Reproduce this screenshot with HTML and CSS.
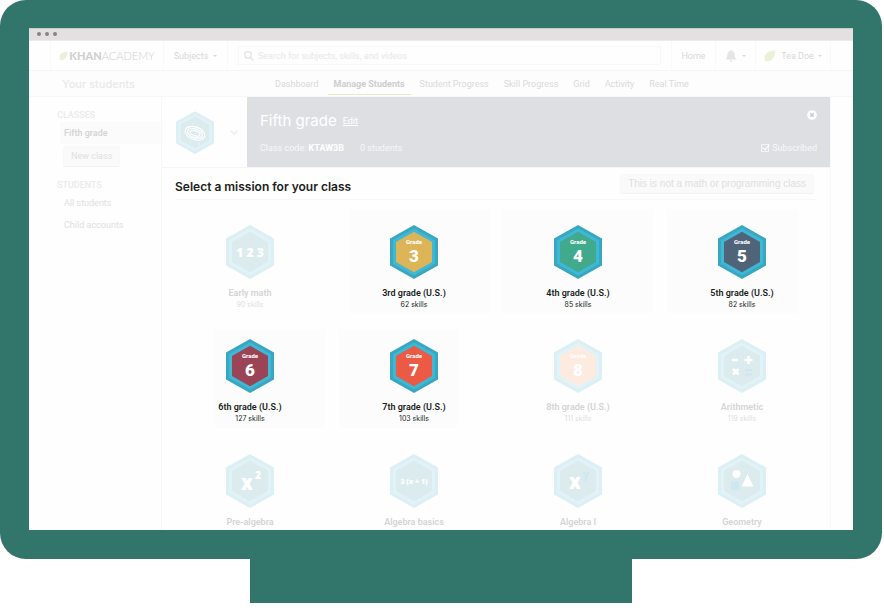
FILE: index.html
```
<!DOCTYPE html>
<html lang="en">
<head>
<meta charset="utf-8">
<title>Khan Academy – Manage Students</title>
<meta name="viewport" content="width=device-width, initial-scale=1">
<link rel="stylesheet" href="styles.css">
</head>
<body>
<svg class="defs" width="0" height="0" aria-hidden="true">
  <symbol id="hex" viewBox="0 0 48 54">
    <path class="hex-rim" d="M24 0 48 13.5v27L24 54 0 40.500v-27z"/>
    <path class="hex-band" d="M24 3.500 45 15.200v23.600L24 50.500 3 38.800V15.200z"/>
    <path class="hex-core" d="M24 6.700 42 16.900v20.200L24 47.300 6 37.100V16.900z"/>
  </symbol>
  <symbol id="leaf" viewBox="0 0 12 12">
    <path d="M11.500.5C6 .3 1 2.500.7 7.500c-.1 1.700.3 3 .8 4 5 .2 9.500-2.500 10-11z"/>
  </symbol>
</svg>

<div class="monitor">
  <div class="screen">
    <div class="window-bar"><i></i><i></i><i></i></div>

    <header class="topbar">
      <a class="logo" href="#"><svg class="leaf" width="9" height="10"><use href="#leaf"/></svg><b>KHAN</b>ACADEMY</a>
      <button class="subjects">Subjects <span class="caret"></span></button>
      <form class="search">
        <label class="search-box">
          <svg width="10" height="10" viewBox="0 0 10 10"><circle cx="4" cy="4" r="3.200"/><path d="M6.500 6.500 9.500 9.500"/></svg>
          <input type="text" aria-label="Search" placeholder="Search for subjects, skills, and videos">
        </label>
      </form>
      <a class="home" href="#">Home</a>
      <button class="bell" aria-label="Notifications">
        <svg width="12" height="12" viewBox="0 0 12 12"><path d="M6 0c.6 0 1 .4 1 1 1.800.5 2.700 2 2.700 4 0 2.500.8 3.500 2 4.500H.3c1.200-1 2-2 2-4.500 0-2 .9-3.500 2.700-4 0-.6.4-1 1-1zM4.600 10.300h2.800C7.300 11.300 6.800 11.800 6 11.800s-1.300-.5-1.400-1.500z"/></svg>
        <span class="caret"></span>
      </button>
      <button class="user"><svg class="leaf" width="12" height="12"><use href="#leaf"/></svg>Tea Doe <span class="caret"></span></button>
    </header>

    <nav class="subnav">
      <h2>Your students</h2>
      <div class="tabs">
        <a href="#">Dashboard</a>
        <a class="current" href="#">Manage Students</a>
        <a href="#">Student Progress</a>
        <a href="#">Skill Progress</a>
        <a href="#">Grid</a>
        <a href="#">Activity</a>
        <a href="#">Real Time</a>
      </div>
    </nav>

    <div class="body">
      <aside class="sidebar">
        <h3>CLASSES</h3>
        <a class="selected" href="#">Fifth grade</a>
        <button class="soft-button">New class</button>
        <h3 class="second">STUDENTS</h3>
        <a href="#">All students</a>
        <a href="#">Child accounts</a>
      </aside>

      <main class="content">
        <section class="class-header">
          <button class="avatar" aria-label="Change class mission">
            <svg class="faded" width="38" height="43" viewBox="0 0 48 54">
              <use href="#hex"/>
              <g class="galaxy" transform="rotate(20 24 28)"><ellipse cx="24" cy="28" rx="13" ry="8"/><ellipse cx="24" cy="28" rx="10" ry="5.500"/><ellipse cx="24" cy="28" rx="6.500" ry="3"/></g>
              <path class="stars" d="M13 21h1v1h-1zM34 19h1v1h-1zM18 39h1v1h-1zM29 41h1v1h-1zM21 15h1v1h-1z"/>
            </svg>
            <svg class="chevron" width="8" height="5" viewBox="0 0 8 5"><path d="M.7.7 4 4 7.300.7"/></svg>
          </button>
          <div class="hero">
            <div class="hero-row">
              <h1>Fifth grade</h1><a href="#">Edit</a>
              <button class="close" aria-label="Close"><svg width="10" height="10" viewBox="0 0 10 10"><circle cx="5" cy="5" r="4.800"/><path d="m3.300 3.300 3.400 3.400m0-3.400L3.300 6.700"/></svg></button>
            </div>
            <div class="hero-row small">
              <span>Class code: <b>KTAW3B</b></span><span>0 students</span>
              <label class="subscribed"><input type="checkbox" checked>Subscribed</label>
            </div>
          </div>
        </section>

        <section class="missions">
          <div class="missions-head">
            <h2>Select a mission for your class</h2>
            <button class="soft-button wide">This is not a math or programming class</button>
          </div>
          <div class="grid">
            <a class="card faded" href="#"><svg viewBox="0 0 48 54"><use href="#hex"/><text class="n123" x="24" y="31.500">1 2 3</text></svg><b>Early math</b><span>90 skills</span></a>
            <a class="card lit third" href="#"><svg viewBox="0 0 48 54"><use href="#hex"/><text class="gr" x="24" y="19">Grade</text><text class="num" x="24" y="37">3</text></svg><b>3rd grade (U.S.)</b><span>62 skills</span></a>
            <a class="card lit fourth" href="#"><svg viewBox="0 0 48 54"><use href="#hex"/><text class="gr" x="24" y="19">Grade</text><text class="num" x="24" y="37">4</text></svg><b>4th grade (U.S.)</b><span>85 skills</span></a>
            <a class="card lit fifth" href="#"><svg viewBox="0 0 48 54"><use href="#hex"/><text class="gr" x="24" y="19">Grade</text><text class="num" x="24" y="37">5</text></svg><b>5th grade (U.S.)</b><span>82 skills</span></a>

            <a class="card lit sixth" href="#"><svg viewBox="0 0 48 54"><use href="#hex"/><text class="gr" x="24" y="19">Grade</text><text class="num" x="24" y="37">6</text></svg><b>6th grade (U.S.)</b><span>127 skills</span></a>
            <a class="card lit seventh" href="#"><svg viewBox="0 0 48 54"><use href="#hex"/><text class="gr" x="24" y="19">Grade</text><text class="num" x="24" y="37">7</text></svg><b>7th grade (U.S.)</b><span>103 skills</span></a>
            <a class="card faded eighth" href="#"><svg viewBox="0 0 48 54"><use href="#hex"/><text class="gr" x="24" y="19">Grade</text><text class="num" x="24" y="37">8</text></svg><b>8th grade (U.S.)</b><span>111 skills</span></a>
            <a class="card faded" href="#"><svg viewBox="0 0 48 54"><use href="#hex"/><path class="ops" d="M14 21h6M26.500 21h8M30.500 17v8M15 30l5.500 5.500M20.500 30 15 35.500"/><path class="ops dim" d="M27 31h7M27 35.500h7"/></svg><b>Arithmetic</b><span>119 skills</span></a>

            <a class="card faded" href="#"><svg viewBox="0 0 48 54"><use href="#hex"/><text class="var" x="21" y="35.500">x</text><text class="sup" x="32" y="25">2</text></svg><b>Pre-algebra</b></a>
            <a class="card faded" href="#"><svg viewBox="0 0 48 54"><use href="#hex"/><text class="expr" x="24" y="29.500">3 (x + 1)</text></svg><b>Algebra basics</b></a>
            <a class="card faded" href="#"><svg viewBox="0 0 48 54"><use href="#hex"/><text class="var" x="21" y="34.500">x</text><text class="sup dim" x="32" y="24">y</text></svg><b>Algebra I</b></a>
            <a class="card faded" href="#"><svg viewBox="0 0 48 54"><use href="#hex"/><path class="shape" d="M29.500 20 35.500 32.500h-12z"/><circle class="shape" cx="18.500" cy="20" r="4"/><path class="shape dim" d="M13 27.500h8.500V36H13z"/></svg><b>Geometry</b></a>
          </div>
        </section>
      </main>
    </div>
  </div>
</div>
<div class="stand"></div>
</body>
</html>
```
FILE: styles.css
```
* { box-sizing: border-box; }

body {
  margin: 0;
  padding-right: 2px;
  background: #fff;
  color: #dcdcdc;
  font: 9px/12px Roboto, "Liberation Sans", sans-serif;
}

h1, h2, h3 { margin: 0; }
a { color: inherit; text-decoration: none; }
button {
  margin: 0;
  padding: 0;
  border: 0;
  background: none;
  color: inherit;
  font: inherit;
}
.defs { position: absolute; }

.monitor {
  padding: 28px 29px 29px;
  border-radius: 26px;
  background: #32766b;
}
.screen { background: #fefefe; overflow: hidden; }
.stand {
  width: 382px;
  height: 44px;
  margin: 0 auto;
  background: #32766b;
}

.window-bar {
  display: flex;
  gap: 4px;
  height: 13px;
  padding: 3px 8px;
  border-top: 1px solid #c8cccb;
  border-bottom: 1px solid #eceaeb;
  background: #e2e0e1;
}
.window-bar i {
  width: 4px;
  height: 4px;
  border-radius: 50%;
  background: #858384;
}

/* Top bar */
.topbar {
  display: flex;
  height: 30px;
  padding: 0 22px 0 21px;
  border-bottom: 1px solid #f5f5f5;
  color: #d8d8d8;
}
.topbar > * {
  display: flex;
  align-items: center;
  justify-content: center;
  border-left: 1px solid #f9f9f9;
}
.topbar > :last-child { border-right: 1px solid #f9f9f9; }
.leaf { fill: #eaf1d6; }
.caret {
  margin-left: 5px;
  border: 2px solid transparent;
  border-top-color: currentColor;
  border-bottom: 0;
}
.logo { width: 113px; font: 300 11px/14px Lato, sans-serif; color: #d0d0d0; }
.logo b { font-weight: 900; }
.logo .leaf { margin-right: 1px; }
.subjects { width: 64px; }
.search { flex: 1; padding: 0 10px; }
.search-box {
  display: flex;
  align-items: center;
  gap: 4px;
  width: 100%;
  height: 19px;
  padding: 0 5px;
  border: 1px solid #f8f8f8;
}
.search-box svg { fill: none; stroke: #e6e6e6; stroke-width: 1.500px; }
.search-box input {
  flex: 1;
  min-width: 0;
  padding: 0;
  border: 0;
  outline: 0;
  background: none;
  font: inherit;
}
.search-box input::placeholder { color: #e8e8e8; opacity: 1; }
.home { width: 44px; }
.bell { width: 40px; }
.bell svg { fill: #e5e5e5; }
.user { width: 76px; }
.user .leaf { margin-right: 5px; }
.user .caret { margin-left: 4px; }

/* Section navigation */
.subnav {
  display: flex;
  align-items: stretch;
  height: 26px;
  padding-left: 33px;
  border-bottom: 1px solid #f7f7f7;
  background: #fdfdfd;
}
.subnav h2 {
  width: 207px;
  font: 500 11px/26px Inter, sans-serif;
  color: #e9e9e9;
}
.tabs { display: flex; gap: 3px; color: #dadada; }
.tabs a {
  height: 24px;
  padding: 0 6px;
  line-height: 26px;
  white-space: nowrap;
}
.tabs .current {
  border-bottom: 1px solid #e3ebc8;
  color: #cecece;
  font-weight: 700;
}

/* Sidebar */
.body { display: flex; padding-right: 22px; }
.sidebar {
  display: flex;
  flex-direction: column;
  align-items: flex-start;
  width: 133px;
  padding: 12px 0 0 31px;
  border-right: 1px solid #f7f7f7;
  color: #e0e0e0;
}
.sidebar h3 {
  margin-left: -3px;
  font-size: 9px;
  line-height: 13px;
  font-weight: 500;
  color: #ebebeb;
}
.sidebar h3.second { margin-top: 12px; }
.sidebar a {
  align-self: stretch;
  padding-left: 4px;
  line-height: 22px;
}
.sidebar .selected {
  margin-bottom: 2px;
  background: #fbfbfb;
  color: #d2d2d2;
  font-weight: 500;
}
.soft-button {
  padding: 0 7px;
  border: 1px solid #f8f8f8;
  border-bottom-color: #f2f2f2;
  border-radius: 2px;
  background: #fafafa;
  color: #e0e0e0;
  line-height: 19px;
}
.sidebar .soft-button { margin-left: 3px; }

/* Class header */
.content { flex: 1; min-width: 0; border-right: 1px solid #f9f9f9; }
.class-header {
  display: flex;
  height: 71px;
  border-bottom: 1px solid #f5f5f5;
}
.avatar {
  display: flex;
  align-items: center;
  gap: 16px;
  width: 85px;
  padding-left: 14px;
}
.chevron { fill: none; stroke: #e9eff0; stroke-width: 1.500px; }
.galaxy { fill: none; stroke: #fff; stroke-width: 1.500px; }
.stars { fill: #fff; }
.hero {
  flex: 1;
  padding: 13px 13px 0;
  background: #dedfe3;
  color: #fff;
}
.hero-row { display: flex; align-items: center; height: 22px; }
.hero-row h1 { font: 400 15px/22px Inter, sans-serif; }
.hero-row a { margin-left: 6px; text-decoration: underline; }
.close { margin-left: auto; height: 22px; }
.close svg { display: block; margin-bottom: 12px; fill: #fff; stroke: #c8c9cf; stroke-width: 1.500px; }
.close circle { stroke: none; }
.hero-row.small { gap: 16px; margin-top: 5px; color: #f7f7f8; }
.hero-row b { color: #fff; font-weight: 700; }
.subscribed { display: flex; align-items: center; gap: 3px; margin-left: auto; }
.subscribed input {
  appearance: none;
  position: relative;
  width: 8px;
  height: 8px;
  margin: 0;
  border: 1px solid #f4f4f5;
}
.subscribed input::after {
  content: "";
  position: absolute;
  left: 2px;
  top: -2px;
  width: 3px;
  height: 6px;
  border: solid #fff;
  border-width: 0 1px 1px 0;
  transform: rotate(40deg);
}

/* Missions */
.missions { padding: 0 6px 0 6px; }
.missions-head {
  display: flex;
  align-items: center;
  justify-content: space-between;
  height: 32px;
  margin: 0 7px;
  padding: 0 3px 0 0;
  border-bottom: 1px solid #f7f7f7;
}
.missions-head h2 {
  margin-top: 6px;
  font: 600 12px/16px Inter, sans-serif;
  color: #1a1d21;
}
.soft-button.wide { font: 10px/18px "Liberation Sans", sans-serif; padding: 0 7px; }
.grid {
  display: grid;
  grid-template-columns: repeat(4, 1fr);
  grid-template-rows: 114px 115px 87px;
  padding-top: 14px;
}
.card {
  position: relative;
  display: flex;
  flex-direction: column;
  align-items: center;
  padding-top: 11px;
  color: #1a1d21;
  font-size: 9px;
  line-height: 12px;
}
.card > svg { flex: none; width: 48px; height: 54px; margin-bottom: 8px; }
.card b { font-weight: 600; }
.card span { font: 7px/11px Inter, sans-serif; }
.card > * { position: relative; }
.lit::before {
  content: "";
  position: absolute;
  inset: -5px 7px 15px 7px;
  background: #fcfcfc;
}
.lit.third::before { left: 18px; }
.lit.fifth::before { right: 26px; }
.lit.sixth::before { top: 1px; left: 47px; }
.lit.seventh::before { top: 1px; right: 39px; }

.hex-rim { fill: var(--rim, #3aa7c1); }
.hex-band { fill: var(--band, #3fb8d6); }
.hex-core { fill: var(--core, #dcebee); }
.faded { --rim: #dceff4; --band: #e1f3f7; }
.card.faded { color: #d4d4d4; }
.card.faded span { color: #dedede; }
.third { --core: #dcb558; }
.fourth { --core: #41a98c; }
.fifth { --core: #4f6478; }
.sixth { --core: #9a4456; }
.seventh { --core: #ea5a45; }
.eighth { --core: #feebe0; }

.card text { fill: #fff; text-anchor: middle; font-family: "Open Sans", sans-serif; font-weight: 800; }
.card .gr { font-family: Roboto, sans-serif; font-size: 6px; }
.card .num { font-family: Roboto, sans-serif; font-weight: 900; font-size: 17px; }
.card .n123 { font-size: 12px; }
.card .var { font-family: Roboto, sans-serif; font-weight: 900; font-size: 22px; }
.card .sup { font-size: 10px; }
.card .expr { font-size: 7px; }
.card text.dim, .shape.dim { fill: #cfe7ef; }
.ops { fill: none; stroke: #fff; stroke-width: 2.500px; }
.ops.dim { stroke: #d0e6ec; stroke-width: 2px; }
.shape { fill: #fff; }
```
